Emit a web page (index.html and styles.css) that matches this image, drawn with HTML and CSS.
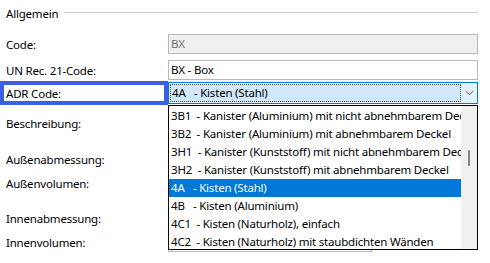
FILE: index.html
```html
<!DOCTYPE html>
<html lang="de">
<head>
    <meta charset="UTF-8">
    <title>Allgemein</title>
    <link rel="stylesheet" href="styles.css">
</head>
<body>
    <div class="form">
        <div class="group-head">
            <span class="group-title">Allgemein</span>
            <div class="group-rule"></div>
        </div>

        <div class="row row-code">
            <label class="caption">Code:</label>
            <div class="field field-disabled">BX</div>
        </div>
        <div class="row row-un">
            <label class="caption">UN Rec. 21-Code:</label>
            <div class="field">BX - Box</div>
        </div>
        <div class="row row-adr">
            <label class="caption caption-marked">ADR Code:</label>
            <div class="combo">
                <div class="combo-text">4A   - Kisten (Stahl)</div>
                <svg class="combo-arrow" width="9" height="6" viewBox="0 0 9 6">
                    <polyline points="0.5,0.8 4.5,4.8 8.5,0.8" fill="none" stroke="#606060" stroke-width="1"/>
                </svg>
            </div>
        </div>
        <div class="row row-desc">
            <label class="caption">Beschreibung:</label>
            <div class="field field-short"></div>
        </div>
        <div class="row row-outer-dim">
            <label class="caption">Außenabmessung:</label>
            <div class="field field-short"></div>
        </div>
        <div class="row row-outer-vol">
            <label class="caption">Außenvolumen:</label>
            <div class="field field-short"></div>
        </div>
        <div class="row row-inner-dim">
            <label class="caption">Innenabmessung:</label>
            <div class="field field-short"></div>
        </div>
        <div class="row row-inner-vol">
            <label class="caption">Innenvolumen:</label>
            <div class="field field-short"></div>
        </div>

        <!-- open list of the ADR combo, lies over the rows below -->
        <div class="dropdown">
            <ul class="dropdown-list">
                <li>3B1  - Kanister (Aluminium) mit nicht abnehmbarem Deckel</li>
                <li>3B2  - Kanister (Aluminium) mit abnehmbarem Deckel</li>
                <li>3H1  - Kanister (Kunststoff) mit nicht abnehmbarem Deckel</li>
                <li>3H2  - Kanister (Kunststoff) mit abnehmbarem Deckel</li>
                <li class="selected">4A   - Kisten (Stahl)</li>
                <li>4B   - Kisten (Aluminium)</li>
                <li>4C1  - Kisten (Naturholz), einfach</li>
                <li>4C2  - Kisten (Naturholz) mit staubdichten Wänden</li>
            </ul>
            <div class="dropdown-scroll">
                <div class="scroll-thumb"></div>
            </div>
        </div>
    </div>
</body>
</html>
```

FILE: styles.css
```css
body {
    margin: 0;
    padding: 0;
    background-color: #fff;
    color: #000;
    font-family: "Noto Sans", "Liberation Sans", sans-serif;
    font-size: 11.5px;
    letter-spacing: -0.2px;
}

.form {
    position: relative;
    width: 490px;
    height: 263px;
    padding-left: 6px;
    box-sizing: border-box;
    overflow: hidden;
}

.group-head {
    display: flex;
    align-items: center;
    width: 472px;
    height: 26px;
}

.group-title {
    margin-right: 6px;
}

.group-rule {
    flex: 1;
    height: 1px;
    margin-top: -2px;
    background-color: #cfcfcf;
}

.row {
    display: flex;
    align-items: center;
    height: 20px;
}

.row-code { margin-top: 8px; }
.row-un { margin-top: 6px; }
.row-adr { margin-top: 1px; height: 24px; }
.row-desc { margin-top: 8px; }
.row-outer-dim { margin-top: 16px; }
.row-outer-vol { margin-top: 4px; }
.row-inner-dim { margin-top: 15px; }
.row-inner-vol { margin-top: 4px; }

.caption {
    width: 162px;
    flex-shrink: 0;
}

.caption-marked {
    width: 168px;
    height: 24px;
    margin-left: -6px;
    padding-left: 2px;
    border: 4px solid #3d5de6;
    box-sizing: border-box;
    display: flex;
    align-items: center;
}

.field {
    width: 310px;
    height: 20px;
    border: 1px solid #b9b9b9;
    box-sizing: border-box;
    padding-left: 2px;
    line-height: 18px;
    background-color: #fff;
}

.field-disabled {
    background-color: #f0f0f0;
    color: #6d6d6d;
}

.field-short {
    width: 204px;
}

.combo {
    width: 310px;
    height: 22px;
    border: 1px solid #0078d7;
    box-sizing: border-box;
    background-color: #e5f1fb;
    display: flex;
    align-items: center;
}

.combo-text {
    width: 291px;
    height: 18px;
    margin-left: 1px;
    border: 1px dotted #4a4a4a;
    box-sizing: border-box;
    line-height: 16px;
    padding-left: 1px;
    background-color: #d4e7f8;
    white-space: pre;
}

.combo-arrow {
    margin-left: 4px;
}

.dropdown {
    position: absolute;
    left: 168px;
    top: 105px;
    width: 310px;
    height: 145px;
    border: 1px solid #000;
    box-sizing: border-box;
    background-color: #fff;
    display: flex;
    overflow: hidden;
}

.dropdown-list {
    list-style: none;
    margin: 0;
    padding: 1px 0 0 0;
    width: 292px;
    flex-shrink: 0;
}

.dropdown-list li {
    height: 18px;
    line-height: 18px;
    padding-left: 2px;
    white-space: pre;
    overflow: hidden;
}

.dropdown-list li.selected {
    background-color: #0078d7;
    color: #fff;
}

.dropdown-scroll {
    flex: 1;
    background-color: #f0f0f0;
    position: relative;
}

.scroll-thumb {
    position: absolute;
    left: 7px;
    top: 44px;
    width: 2px;
    height: 16px;
    border-radius: 1px;
    background-color: #858585;
}
```
